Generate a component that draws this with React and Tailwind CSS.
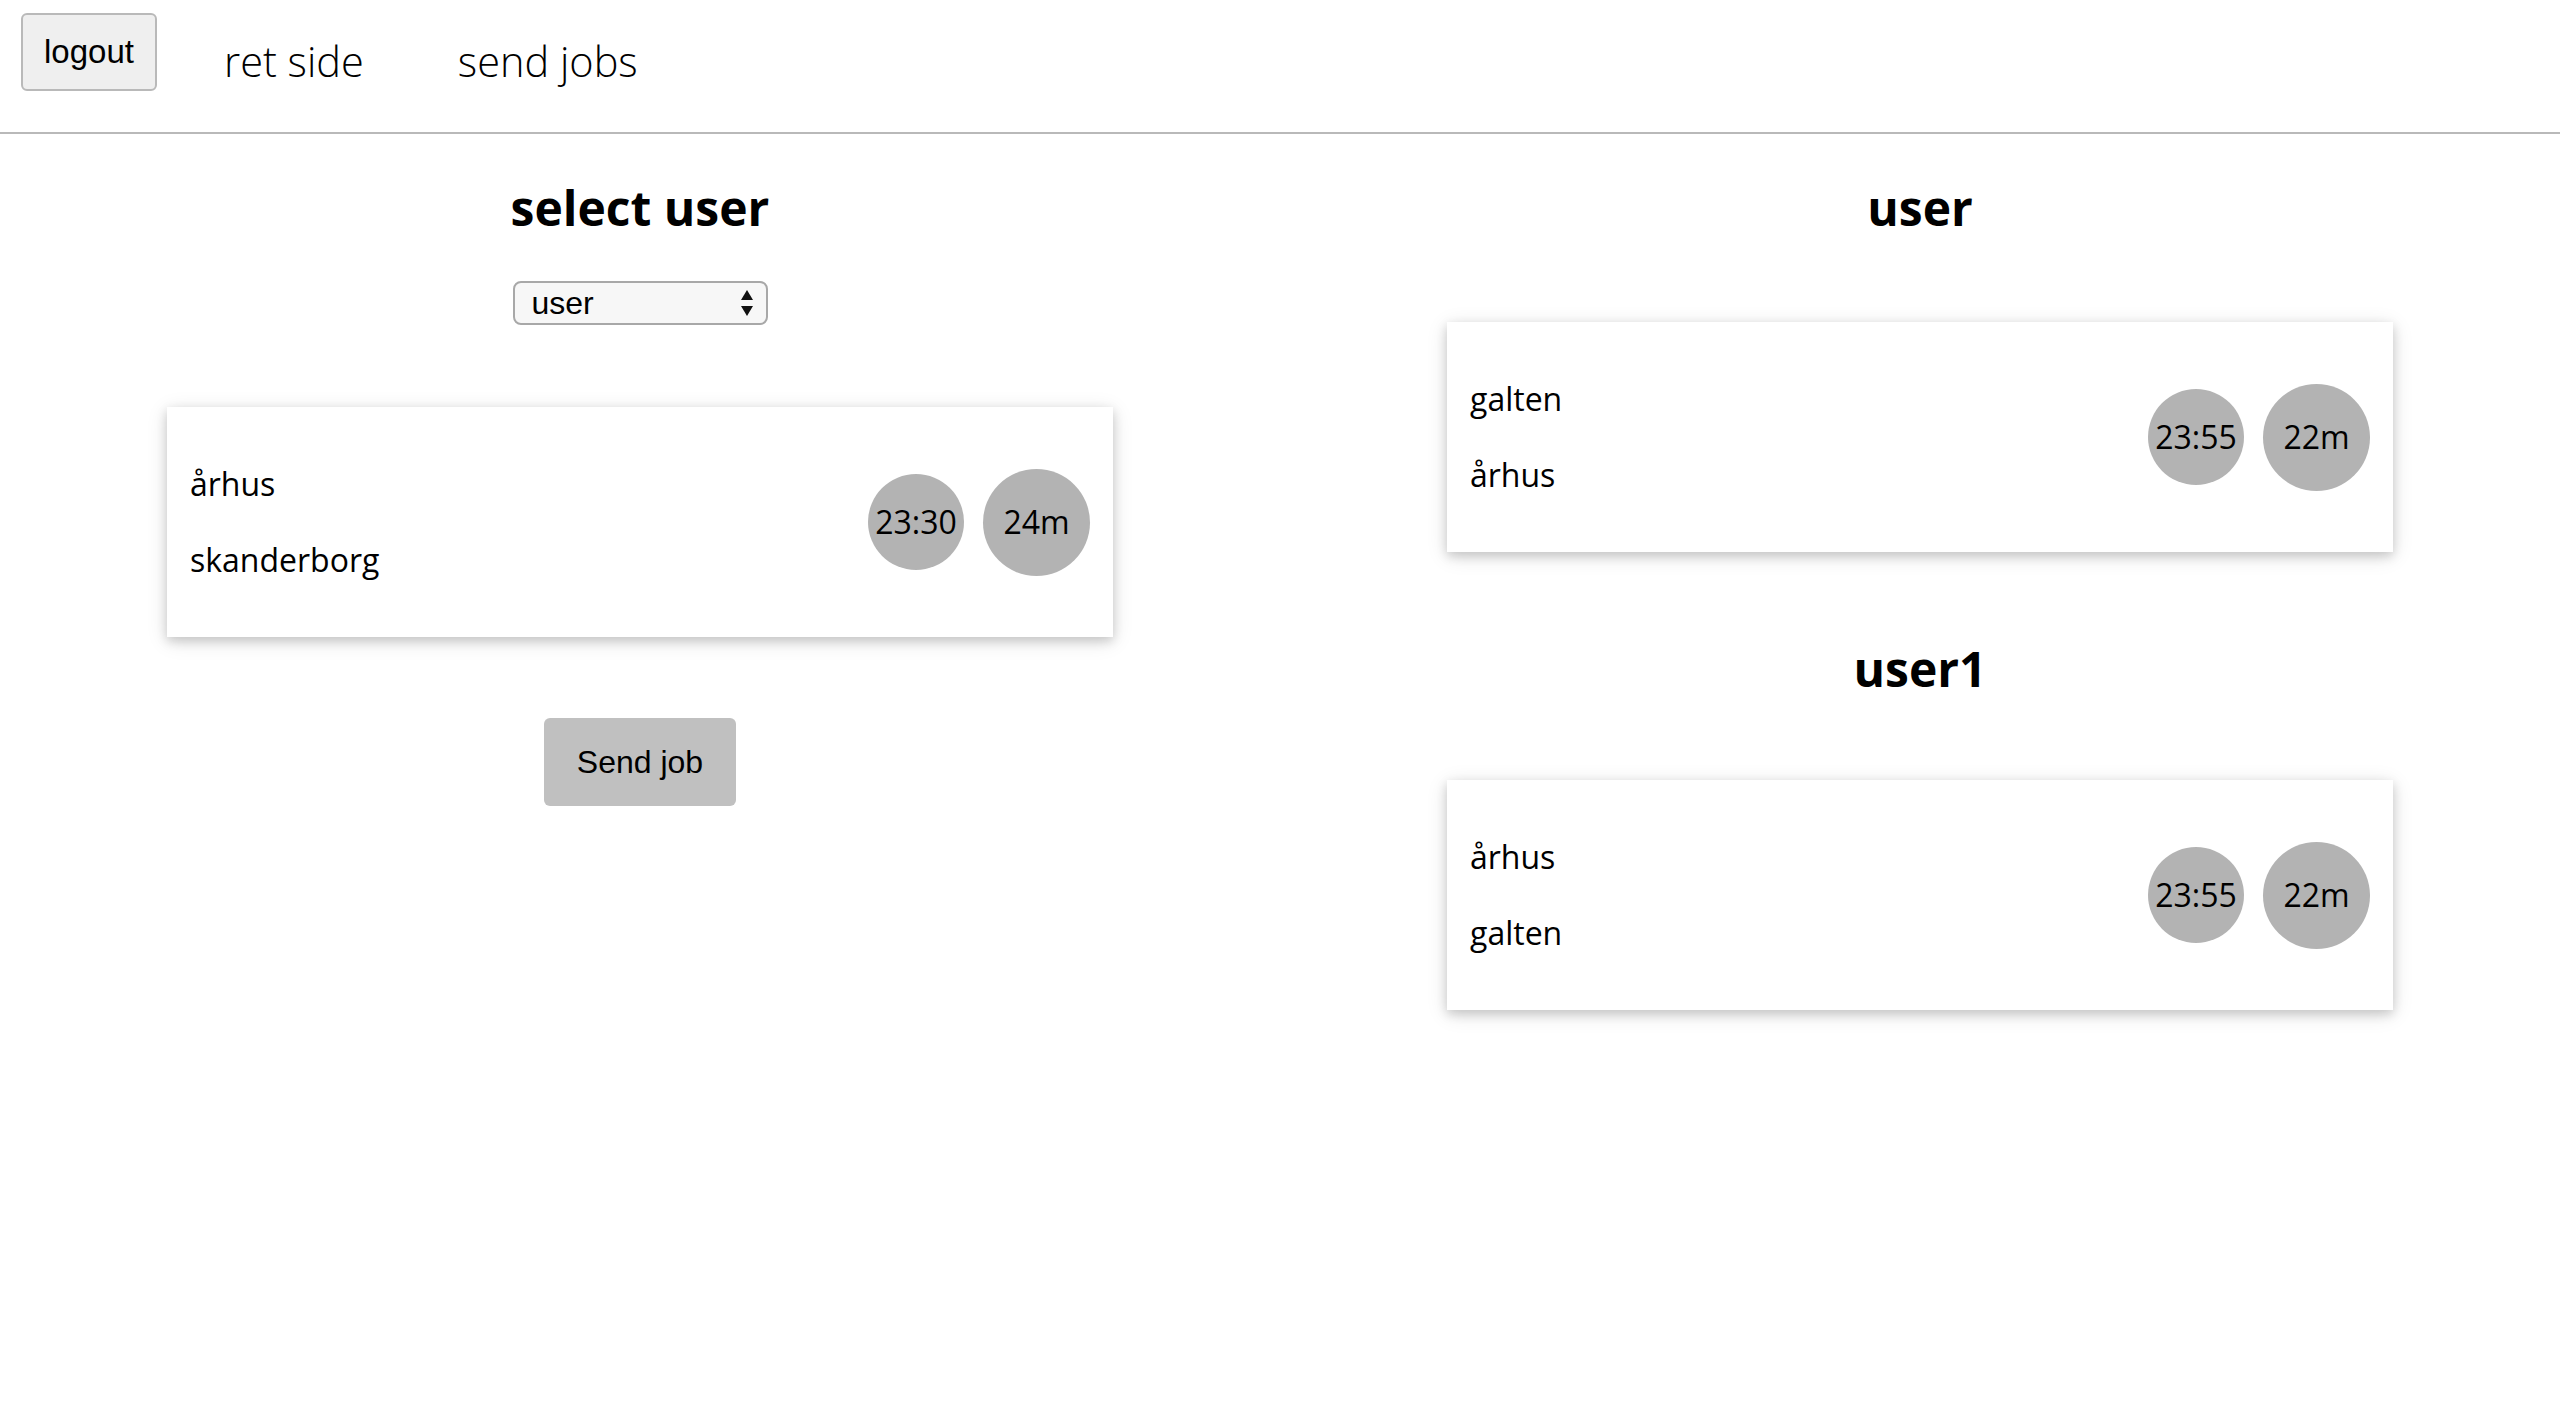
const jobs = {
  left: { from: "århus", to: "skanderborg", time: "23:30", dur: "24m" },
  users: [
    { name: "user", from: "galten", to: "århus", time: "23:55", dur: "22m" },
    { name: "user1", from: "århus", to: "galten", time: "23:55", dur: "22m" },
  ],
};

const sans = "font-['Open_Sans',sans-serif]";
const helv = "font-['Liberation_Sans',Arial,sans-serif]";

const JobCard = ({ job, className = "" }) => (
  <div
    className={`w-[946px] bg-white px-[23px] py-[23px] flex items-center justify-between shadow-[0_4px_10px_0_rgba(0,0,0,0.16),0_4px_20px_0_rgba(0,0,0,0.12)] ${className}`}
  >
    <div className="text-[32px] leading-[44px] text-black">
      <p className="my-[32px]">{job.from}</p>
      <p className="my-[32px]">{job.to}</p>
    </div>
    <div className="flex items-center gap-[19px] text-[32px] leading-none text-black">
      <div className="w-[96px] h-[96px] rounded-full bg-[#b3b3b3] flex items-center justify-center">
        {job.time}
      </div>
      <div className="w-[107px] h-[107px] rounded-full bg-[#b3b3b3] flex items-center justify-center">
        {job.dur}
      </div>
    </div>
  </div>
);

export default function App() {
  return (
    <div className={`min-h-screen bg-white text-black ${sans}`}>
      {/* Header */}
      <div className="h-[134px] flex items-start border-b-2 border-[#b9b9b9]">
        <button
          className={`mt-[13px] ml-[21px] w-[136px] h-[78px] bg-[#efefef] border-2 border-[#b9b9b9] rounded-[6px] text-[33px] ${helv}`}
        >
          logout
        </button>
        <a className="mt-[34px] ml-[67px] text-[41.5px] font-light leading-[54px]">ret side</a>
        <a className="mt-[34px] ml-[94px] text-[41.5px] font-light leading-[54px]">send jobs</a>
      </div>

      {/* Body */}
      <div className="grid grid-cols-2">
        <div className="flex flex-col items-center pt-[41px]">
          <h2 className="text-[48px] font-bold leading-[65px]">select user</h2>
          <div className="relative mt-[41px]">
            <select
              className={`appearance-none w-[255px] h-[44px] bg-[#f7f7f7] border-2 border-[#a8a8a8] rounded-[8px] pl-[17px] text-[32px] leading-none ${helv}`}
              defaultValue="user"
            >
              <option>user</option>
              <option>user1</option>
            </select>
            <svg
              className="absolute right-[14px] top-[9px] pointer-events-none"
              width="14"
              height="27"
              viewBox="0 0 14 27"
            >
              <path d="M7 0 L13 10 L1 10 Z" fill="#111" />
              <path d="M1 16 L13 16 L7 26 Z" fill="#111" />
            </svg>
          </div>
          <JobCard job={jobs.left} className="mt-[82px]" />
          <button
            className={`mt-[81px] w-[192px] h-[88px] bg-[#c0c0c0] rounded-[6px] text-[32px] ${helv}`}
          >
            Send job
          </button>
        </div>

        <div className="flex flex-col items-center pt-[41px]">
          <h2 className="text-[48px] font-bold leading-[65px]">{jobs.users[0].name}</h2>
          <JobCard job={jobs.users[0]} className="mt-[82px]" />
          <h2 className="mt-[84px] text-[48px] font-bold leading-[65px]">{jobs.users[1].name}</h2>
          <JobCard job={jobs.users[1]} className="mt-[79px]" />
        </div>
      </div>
    </div>
  );
}
